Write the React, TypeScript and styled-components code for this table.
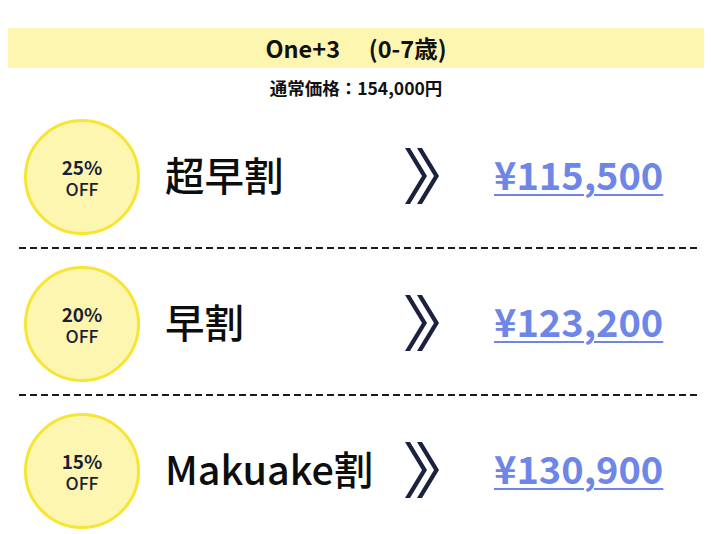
import * as React from 'react'
import styled, { createGlobalStyle } from 'styled-components'

const GlobalStyle = createGlobalStyle`
  body {
    margin: 8px;
    background: #ffffff;
    font-family: "Noto Sans CJK JP", "Noto Sans", sans-serif;
    color: #111111;
  }
`

const Page = styled.div`
  display: flex;
  flex-direction: column;
`

const TitleBand = styled.div`
  margin-top: 20px;
  height: 40px;
  display: flex;
  align-items: center;
  justify-content: center;
  background: #fdf6b0;
  font-size: 23.5px;
  font-weight: 700;
  white-space: pre;
`

const Subtitle = styled.div`
  margin-top: 10px;
  text-align: center;
  font-size: 17.5px;
  line-height: 20px;
  font-weight: 700;
`

const PlanList = styled.div`
  margin: 4px 7px 0 11px;
  display: flex;
  flex-direction: column;
`

const PlanRow = styled.div<{ $divider: boolean }>`
  display: flex;
  align-items: center;
  padding: 16px 0 13px 5px;
  background-image: ${({ $divider }) =>
    $divider
      ? 'repeating-linear-gradient(to right, #1a1a1a 0 7px, transparent 7px 11px)'
      : 'none'};
  background-size: 100% 2px;
  background-position: left bottom;
  background-repeat: no-repeat;
  height: 147px;
  box-sizing: border-box;
`

const Badge = styled.div`
  width: 116px;
  height: 116px;
  flex-shrink: 0;
  box-sizing: border-box;
  border-radius: 50%;
  border: 3px solid #f7e533;
  background: #fdf6b0;
  display: flex;
  flex-direction: column;
  align-items: center;
  justify-content: center;
  color: #1b1f36;
`

const BadgeRate = styled.span`
  font-size: 19px;
  line-height: 22px;
  font-weight: 700;
`

const BadgeOff = styled.span`
  font-size: 17.5px;
  line-height: 21px;
  font-weight: 500;
`

const PlanName = styled.div`
  margin-left: 25px;
  width: 240px;
  font-size: 39.5px;
  line-height: 1;
  padding-bottom: 6px;
  font-weight: 500;
  color: #0d0d0d;
`

const Arrow = styled.svg`
  width: 34px;
  height: 56px;
  flex-shrink: 0;
  margin-bottom: 2px;
`

const Price = styled.a`
  margin-left: 55px;
  font-size: 38px;
  line-height: 1;
  padding-bottom: 6px;
  font-weight: 700;
  color: #6e86e8;
  text-decoration: underline;
  text-decoration-thickness: 2px;
  text-underline-offset: 4px;
`

const PLANS = [
  { rate: '25%', name: '超早割', price: '¥115,500' },
  { rate: '20%', name: '早割', price: '¥123,200' },
  { rate: '15%', name: 'Makuake割', price: '¥130,900' },
]

const DoubleChevron = () => (
  <Arrow viewBox="0 0 34 56">
    <polygon points="0,0 5,0 22,28 5,56 0,56 17,28" fill="#1b2240" />
    <polygon points="12,0 17,0 34,28 17,56 12,56 29,28" fill="#1b2240" />
  </Arrow>
)

const App: React.FunctionComponent = () => (
  <Page>
    <GlobalStyle />
    <TitleBand>One+3　 (0-7歳)</TitleBand>
    <Subtitle>通常価格：154,000円</Subtitle>
    <PlanList>
      {PLANS.map((plan, index) => (
        <PlanRow key={plan.name} $divider={index < PLANS.length - 1}>
          <Badge>
            <BadgeRate>{plan.rate}</BadgeRate>
            <BadgeOff>OFF</BadgeOff>
          </Badge>
          <PlanName>{plan.name}</PlanName>
          <DoubleChevron />
          <Price href="#">{plan.price}</Price>
        </PlanRow>
      ))}
    </PlanList>
  </Page>
)

export default App
